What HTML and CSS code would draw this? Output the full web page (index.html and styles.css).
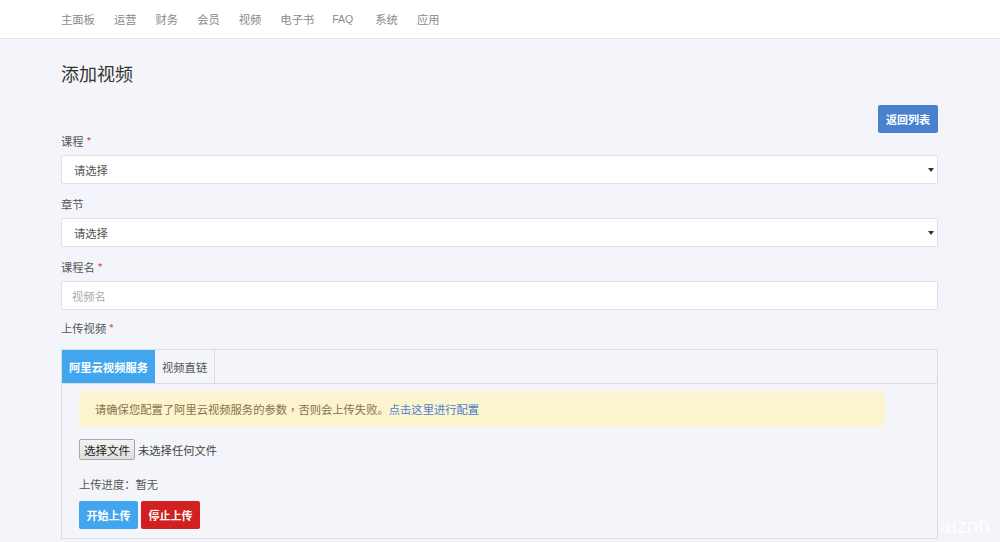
FILE: index.html
```html
<!DOCTYPE html>
<html lang="zh-CN">
<head>
<meta charset="utf-8">
<title>添加视频</title>
<link rel="stylesheet" href="styles.css">
</head>
<body>
<header class="topnav">
  <nav class="topnav-inner">
    <a class="nav-item">主面板</a>
    <a class="nav-item">运营</a>
    <a class="nav-item">财务</a>
    <a class="nav-item">会员</a>
    <a class="nav-item">视频</a>
    <a class="nav-item">电子书</a>
    <a class="nav-item nav-faq">FAQ</a>
    <a class="nav-item">系统</a>
    <a class="nav-item">应用</a>
  </nav>
</header>
<main class="container">
  <h1 class="page-title">添加视频</h1>
  <div class="toolbar">
    <button class="btn btn-primary">返回列表</button>
  </div>
  <div class="form-group">
    <label class="form-label">课程 <span class="req">*</span></label>
    <div class="select-wrap"><div class="form-control">请选择</div></div>
  </div>
  <div class="form-group">
    <label class="form-label">章节</label>
    <div class="select-wrap"><div class="form-control">请选择</div></div>
  </div>
  <div class="form-group form-group-tight">
    <label class="form-label">课程名 <span class="req">*</span></label>
    <div class="form-control placeholder">视频名</div>
  </div>
  <div class="form-group upload-group">
    <label class="form-label">上传视频 <span class="req">*</span></label>
    <div class="panel">
      <div class="tabs">
        <div class="tab active">阿里云视频服务</div>
        <div class="tab">视频直链</div>
      </div>
      <div class="tab-body">
        <div class="alert">请确保您配置了阿里云视频服务的参数<span class="cpunct">，</span>否则会上传失败。<a class="alert-link">点击这里进行配置</a></div>
        <div class="file-row">
          <span class="file-btn">选择文件</span>
          <span class="file-name">未选择任何文件</span>
        </div>
        <div class="progress-text">上传进度<span class="cpunct">：</span>暂无</div>
        <div class="actions">
          <button class="btn btn-start">开始上传</button>
          <button class="btn btn-stop">停止上传</button>
        </div>
      </div>
    </div>
  </div>
</main>
<div class="watermark">aiznh</div>
</body>
</html>
```
FILE: styles.css
```css
* { box-sizing: border-box; }
html, body {
  margin: 0;
  padding: 0;
  background: #f4f5fa;
  font-family: "Noto Sans CJK SC", "Liberation Sans", sans-serif;
  color: #555;
  font-size: 11.3px;
  height: 542px;
  overflow: hidden;
}
.topnav {
  background: #fff;
  height: 39px;
  border-bottom: 1px solid #e6e7ec;
}
.topnav-inner {
  display: flex;
  align-items: center;
  height: 38px;
  padding-left: 61px;
  gap: 19px;
}
.nav-item {
  color: #8a8a8a;
  font-size: 11.3px;
  text-decoration: none;
}
.nav-faq {
  font-family: "Liberation Sans", sans-serif;
  font-size: 10.5px;
  margin-left: -1px;
  margin-right: 3px;
}
.container {
  padding: 0 62px 0 61px;
}
.page-title {
  font-size: 18px;
  font-weight: normal;
  color: #333;
  margin: 22px 0 0;
  line-height: 24px;
}
.toolbar {
  display: flex;
  justify-content: flex-end;
  margin-top: 20px;
}
.btn {
  border: none;
  height: 28px;
  padding: 0;
  width: 59px;
  color: #fff;
  font-weight: bold;
  font-size: 11px;
  font-family: "Noto Sans CJK SC", sans-serif;
  border-radius: 2px;
}
.btn-primary { background: #4a80d0; width: 60px; }
.form-group { margin-bottom: 12px; }
.form-group-tight { margin-bottom: 10px; }
.form-label {
  display: block;
  line-height: 17px;
  margin-bottom: 5px;
  color: #555;
}
.req { color: #e04848; }
.form-control {
  height: 29px;
  background: #fff;
  border: 1px solid #dde0e8;
  border-radius: 2px;
  padding: 0 12px;
  display: flex;
  align-items: center;
  color: #555;
}
.placeholder { color: #aaa; padding: 0 10px; }
.select-wrap { position: relative; }
.select-wrap::after {
  content: "";
  position: absolute;
  right: 4px;
  top: 13px;
  border-left: 3px solid transparent;
  border-right: 3px solid transparent;
  border-top: 4px solid #333;
}
.upload-group .form-label { margin-bottom: 12px; }
.panel {
  border: 1px solid #dcdde3;
  height: 190px;
}
.tabs {
  display: flex;
  height: 34px;
  border-bottom: 1px solid #dcdde3;
}
.tab {
  display: flex;
  align-items: center;
  padding: 0 7px;
  color: #555;
  border-right: 1px solid #dcdde3;
}
.tab.active {
  background: #42a6ef;
  color: #fff;
  font-weight: bold;
  border-right: none;
  width: 93px;
  justify-content: center;
  padding: 0;
}
.tab-body {
  padding: 7px 52px 0 17px;
}
.alert {
  background: #fcf3cf;
  color: #8a7245;
  height: 36px;
  border-radius: 2px;
  display: flex;
  align-items: center;
  padding: 0 16px;
}
.cpunct { font-family: "Noto Sans CJK TC", sans-serif; }
.alert-link { color: #4a80d0; }
.file-row {
  display: flex;
  align-items: center;
  margin-top: 12px;
  height: 21px;
}
.file-btn {
  display: inline-flex;
  align-items: center;
  height: 21px;
  padding: 0 4px;
  border: 1px solid #a8a8a8;
  border-radius: 2px;
  background: linear-gradient(#f3f3f3, #dedede);
  color: #222;
  font-size: 11.5px;
}
.file-name { margin-left: 3px; color: #444; }
.progress-text {
  margin-top: 16px;
  line-height: 17px;
  color: #555;
}
.actions {
  display: flex;
  gap: 3px;
  margin-top: 8px;
}
.btn-start { background: #42a6ef; }
.btn-stop { background: #d21f1f; }
.watermark {
  position: absolute;
  left: 940px;
  top: 514px;
  font-family: "Liberation Sans", sans-serif;
  font-size: 21px;
  color: rgba(255, 255, 255, 0.9);
}
```
